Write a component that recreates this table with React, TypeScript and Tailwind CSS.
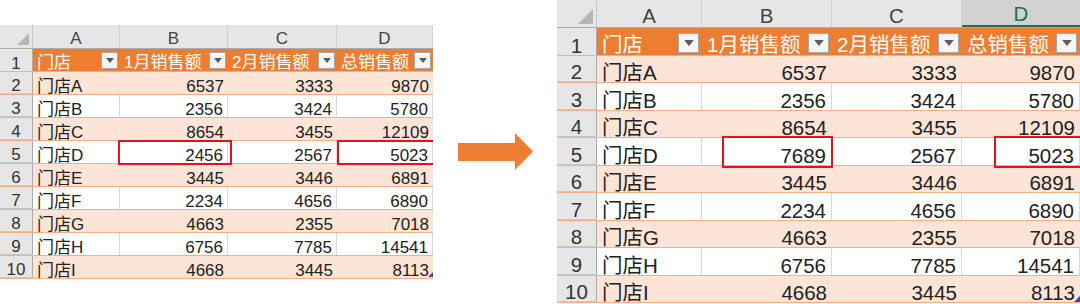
import React from 'react';

type Cfg = {
  grid: string;
  headH: string;
  rowH: string;
  text: string;
  pad: string;
  dd: string;
  tri: string;
  corner: string;
};

const small: Cfg = {
  grid: 'grid grid-cols-[33px_87px_108px_109px_96px]',
  headH: 'h-[24px]',
  rowH: 'h-[23px]',
  text: 'text-[17px] leading-[14px]',
  pad: 'px-[4px]',
  dd: 'w-[17px] h-[17px] mr-[2px] mb-[2px]',
  tri: 'w-[8px] h-[5px]',
  corner: 'w-[12px] h-[12px]',
};

const big: Cfg = {
  grid: 'grid grid-cols-[40px_105px_130px_130px_118px]',
  headH: 'h-[28px]',
  rowH: 'h-[27.5px]',
  text: 'text-[20.5px] leading-[18px]',
  pad: 'px-[5px]',
  dd: 'w-[21px] h-[20px] mr-[3px] mb-[2px]',
  tri: 'w-[10px] h-[6px]',
  corner: 'w-[15px] h-[15px]',
};

const stores = ['门店A', '门店B', '门店C', '门店D', '门店E', '门店F', '门店G', '门店H', '门店I'];
const jan = [6537, 2356, 8654, 2456, 3445, 2234, 4663, 6756, 4668];
const feb = [3333, 3424, 3455, 2567, 3446, 4656, 2355, 7785, 3445];
const total = [9870, 5780, 12109, 5023, 6891, 6890, 7018, 14541, 8113];

const Dropdown = ({ cfg }: { cfg: Cfg }) => (
  <span className={`flex shrink-0 items-center justify-center bg-[#f5f5f5] border border-[#a6a6a6] ${cfg.dd}`}>
    <svg viewBox="0 0 8 5" className={cfg.tri}>
      <path d="M0 0h8L4 5z" fill="#5a5a5a" />
    </svg>
  </span>
);

const Sheet = ({ cfg, janData, selectD }: { cfg: Cfg; janData: number[]; selectD?: boolean }) => {
  const letters = ['A', 'B', 'C', 'D'];
  const heads = ['门店', '1月销售额', '2月销售额', '总销售额'];

  return (
    <div className={`${cfg.text} text-[#222]`}>
      {/* column letters */}
      <div className={`${cfg.grid} ${cfg.headH} bg-[#e6e6e6] border-b border-[#ababab]`}>
        <div className="flex items-end justify-end p-[3px] border-r border-[#c8c8c8]">
          <svg viewBox="0 0 12 12" className={cfg.corner}>
            <polygon points="12,0 12,12 0,12" fill="#b5b5b5" />
          </svg>
        </div>
        {letters.map((l) => {
          const sel = selectD && l === 'D';
          return (
            <div
              key={l}
              className={
                sel
                  ? 'flex items-end justify-center pb-[2px] bg-[#d2d2d2] text-[#217346] border-b-2 border-[#217346]'
                  : 'flex items-end justify-center pb-[2px] text-[#444] border-r border-[#d0d0d0]'
              }
            >
              {l}
            </div>
          );
        })}
      </div>

      {/* header row */}
      <div className={`${cfg.grid} ${cfg.rowH} border-b border-[#f4b084]`}>
        <div className="flex items-end justify-center bg-[#e6e6e6] text-[#333] border-r border-[#ababab]">1</div>
        {heads.map((h) => (
          <div key={h} className={`flex items-end justify-between bg-[#ed7d31] text-white ${cfg.pad} pr-0`}>
            <span className="pb-[1px]">{h}</span>
            <Dropdown cfg={cfg} />
          </div>
        ))}
      </div>

      {/* data rows */}
      {stores.map((s, i) => {
        const band = i % 2 === 0;
        const cell = band
          ? `flex items-end bg-[#fce4d6] ${cfg.pad}`
          : `flex items-end bg-white border-r border-[#d9d9d9] ${cfg.pad}`;
        return (
          <div key={s} className={`${cfg.grid} ${cfg.rowH} border-b border-[#f4b084]`}>
            <div className="flex items-end justify-center bg-[#e6e6e6] text-[#333] border-r border-[#ababab] border-b border-b-[#c8c8c8]">
              {i + 2}
            </div>
            <div className={cell}>{s}</div>
            <div className={`${cell} justify-end`}>{janData[i]}</div>
            <div className={`${cell} justify-end`}>{feb[i]}</div>
            <div className={`${cell} justify-end`}>{total[i]}</div>
          </div>
        );
      })}
    </div>
  );
};

export default function App() {
  const janAfter = jan.map((v, i) => (i === 3 ? 7689 : v));

  return (
    <div className="w-[1080px] h-[304px] bg-white flex overflow-hidden" style={{ fontFamily: '"Liberation Sans", "Noto Sans CJK SC", sans-serif' }}>
      {/* before */}
      <div className="relative w-[433px] mt-[25px] h-[254px] overflow-hidden shrink-0">
        <Sheet cfg={small} janData={jan} />
        <div className="absolute left-[118px] top-[115px] w-[114px] h-[25px] border-2 border-[#e5121b]" />
        <div className="absolute left-[337px] top-[115px] w-[100px] h-[25px] border-2 border-[#e5121b]" />
        <div className="absolute left-[428px] top-[247px] w-0 h-0 border-l-[5px] border-l-transparent border-b-[5px] border-b-[#3b4a9c]" />
      </div>

      {/* arrow */}
      <div className="w-[124px] shrink-0 flex items-center justify-center pb-[2px]">
        <svg viewBox="0 0 75 37" className="w-[75px] h-[37px]">
          <path d="M0 10h57V0l18 18.5L57 37V28H0z" fill="#ed7d31" />
        </svg>
      </div>

      {/* after */}
      <div className="relative w-[523px] h-[304px] overflow-hidden shrink-0">
        <Sheet cfg={big} janData={janAfter} selectD />
        <div className="absolute left-[165px] top-[136px] w-[111px] h-[32px] border-2 border-[#e5121b]" />
        <div className="absolute left-[437px] top-[136px] w-[130px] h-[32px] border-2 border-[#e5121b]" />
        <div className="absolute left-[517px] top-[296px] w-0 h-0 border-l-[6px] border-l-transparent border-b-[6px] border-b-[#3b4a9c]" />
      </div>
    </div>
  );
}
